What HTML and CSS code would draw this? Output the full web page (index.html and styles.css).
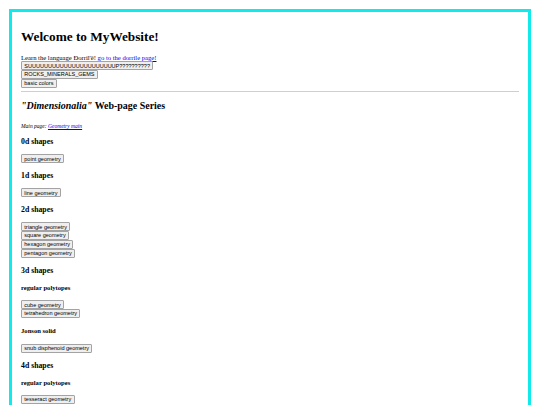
FILE: index.html
```html
<!DOCTYPE html>
<html lang="en">
<head>
<meta charset="utf-8">
<title>MyWebsite</title>
<link rel="stylesheet" href="styles.css">
</head>
<body>
<h1>Welcome to MyWebsite!</h1>
Learn the language Ðorril'ë! <a href="#">go to the dorrile page!</a><br>
<div class="top-buttons">
<button>SUUUUUUUUUUUUUUUUUUUUUUP??????????</button><br>
<button>ROCKS_MINERALS_GEMS</button><br>
<button>basic colors</button>
</div>
<hr>
<h2><i>"Dimensionalia"</i> Web-page Series</h2>
<p><small><i>Main page: <a href="#">Geometry main</a></i></small></p>
<h3>0d shapes</h3>
<button>point geometry</button>
<h3>1d shapes</h3>
<button>line geometry</button>
<h3>2d shapes</h3>
<button>triangle geometry</button><br>
<button>square geometry</button><br>
<button>hexagon geometry</button><br>
<button>pentagon geometry</button>
<h3>3d shapes</h3>
<h4>regular polytopes</h4>
<button>cube geometry</button><br>
<button>tetrahedron geometry</button>
<h4>Jonson solid</h4>
<button>snub disphenoid geometry</button>
<h3>4d shapes</h3>
<h4>regular polytopes</h4>
<button>tesseract geometry</button>
</body>
</html>
```
FILE: styles.css
```css
html {
  background: #ffffff;
}

body {
  margin: 9px;
  padding: 8px 9px;
  border: 3px solid #10eaea;
  font-family: "Liberation Serif", "Times New Roman", serif;
  font-size: 6.64px;
  color: #000000;
  min-height: 600px;
}

a {
  color: #0000ee;
  text-decoration: underline;
}

h1 {
  font-size: 13.28px;
  margin: 8.9px 0;
  font-weight: bold;
}

h2 {
  font-size: 9.96px;
  margin: 8.27px 0 11px;
  font-weight: bold;
}

h3 {
  font-size: 7.77px;
  margin: 8.1px 0;
  font-weight: bold;
}

h4 {
  font-size: 6.64px;
  margin: 9.3px 0;
  font-weight: bold;
}

p {
  margin: 6.64px 0;
}

small {
  font-size: 5.53px;
}

.top-buttons {
  margin-top: 0.5px;
}

button {
  font-family: "Liberation Sans", Arial, sans-serif;
  font-size: 5.53px;
  line-height: 6.35px;
  padding: 0.25px 2.3px;
  margin: 0;
  border: 1px solid #a3a3a3;
  border-radius: 1px;
  background: #efefef;
  color: #000000;
}

hr {
  margin: 3px 0 3.3px;
  border: 0;
  border-top: 1px solid #cfcfcf;
  height: 0;
}
```
